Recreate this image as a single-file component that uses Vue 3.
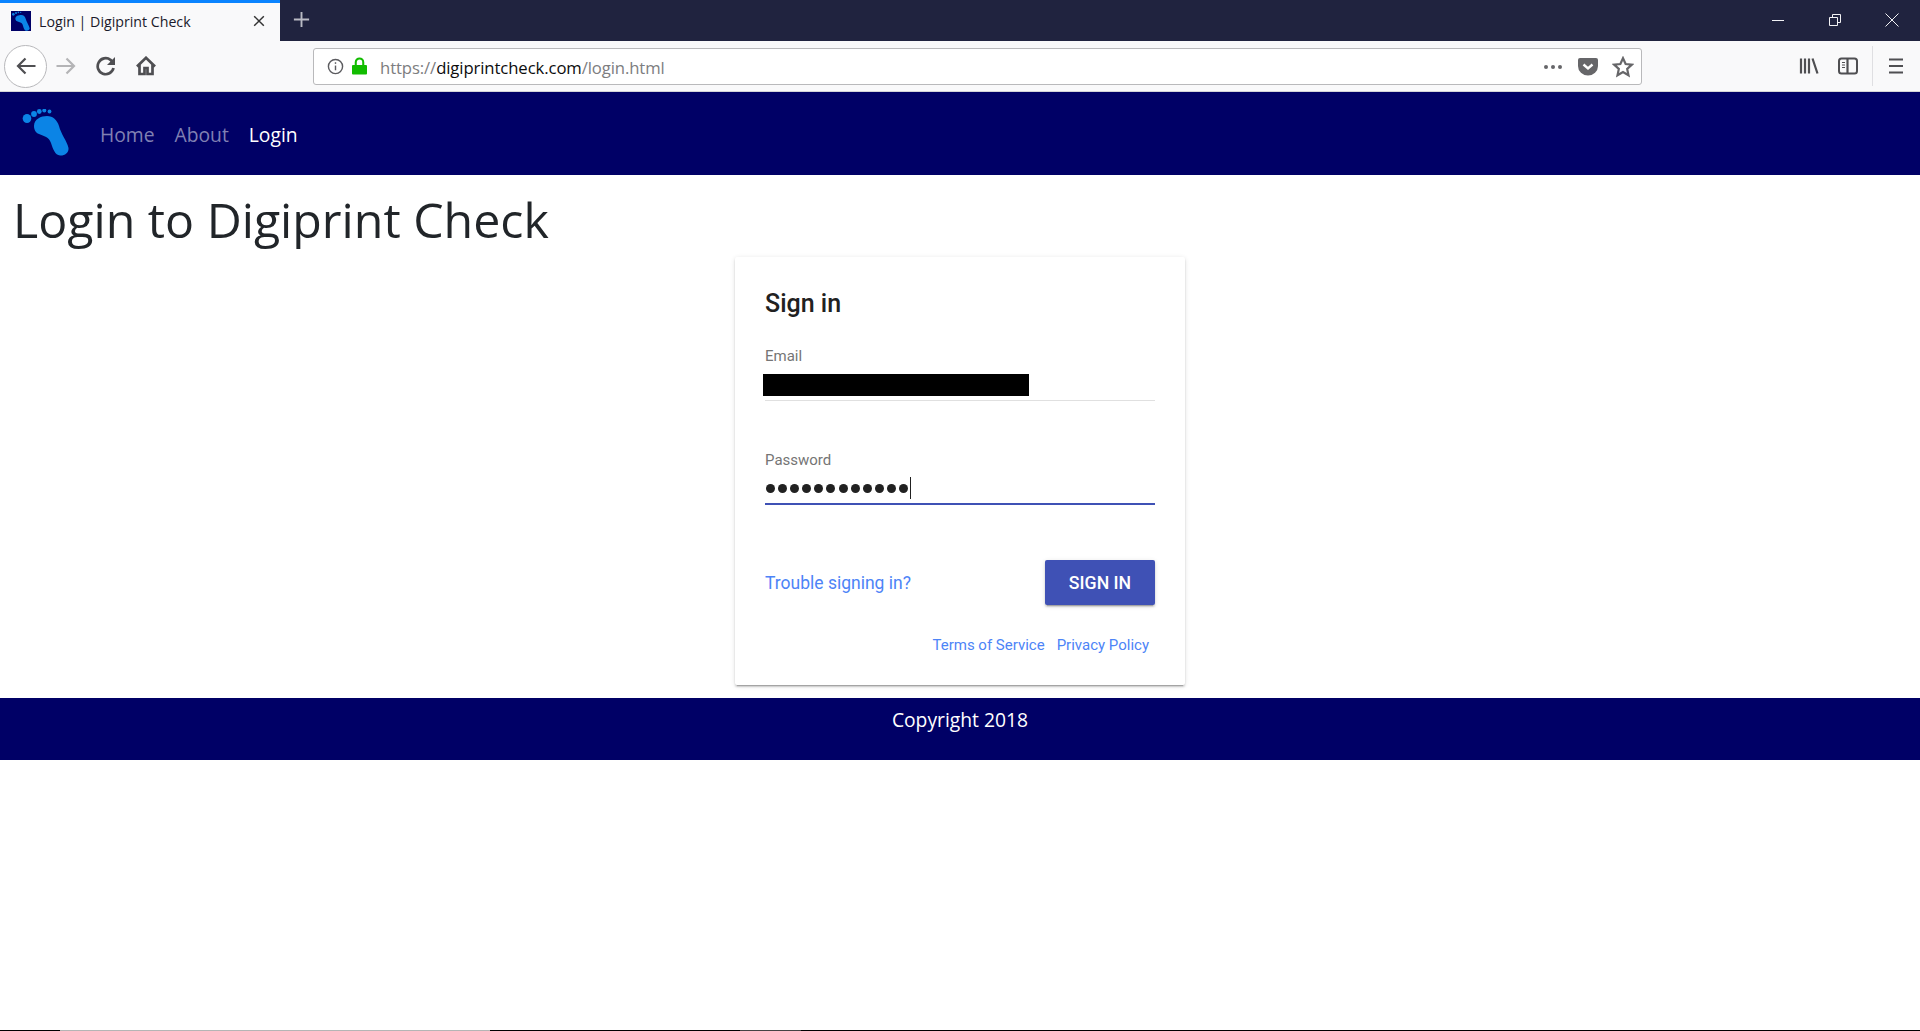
<script setup>
const dots = Array.from({ length: 12 }, (_, i) => i)
</script>

<template>
  <div class="page">
    <header class="tabstrip">
      <div class="tab">
        <svg class="favicon" viewBox="14 14 60 60" aria-hidden="true">
          <rect x="14" y="14" width="60" height="60" fill="#000066" />
          <path class="foot" d="M27 37C27 29 37 26 45 26C52 26 56 31 58 37C60 46 68 56 70 66C71 71 63 75 58 73C53 70 51 61 49 55C47 49 42 48 36 46C31 44 27 42 27 37Z" />
          <circle class="foot" cx="21" cy="24" r="4" />
          <circle class="foot" cx="29" cy="20" r="3" />
          <circle class="foot" cx="36" cy="18" r="2.5" />
          <circle class="foot" cx="43" cy="18" r="2" />
        </svg>
        <span class="tab-title">Login | Digiprint Check</span>
        <svg class="tab-close" viewBox="0 0 16 16" aria-hidden="true"><path d="M2.5 2.5l11 11M13.5 2.5l-11 11" /></svg>
      </div>
      <svg class="new-tab" viewBox="0 0 20 20" aria-hidden="true"><path d="M10 2v16M2 10h16" /></svg>
      <div class="window-controls">
        <svg viewBox="0 0 16 16" aria-hidden="true"><path d="M2 8.5h12" /></svg>
        <svg viewBox="0 0 16 16" aria-hidden="true"><path d="M2.5 5.5h8v8h-8zM5.5 5.5v-3h8v8h-3" /></svg>
        <svg viewBox="0 0 16 16" aria-hidden="true"><path d="M1.5 1.5l13 13M14.5 1.5l-13 13" /></svg>
      </div>
    </header>

    <div class="toolbar">
      <div class="nav-buttons">
        <span class="back-circle">
          <svg class="tool-icon" viewBox="0 0 20 20" aria-hidden="true"><path d="M19.500 10H2M9.500 2.500L2 10l7.500 7.500" /></svg>
        </span>
        <svg class="tool-icon forward" viewBox="0 0 20 20" aria-hidden="true"><path d="M.5 10H18M10.500 2.500L18 10l-7.500 7.500" /></svg>
        <svg class="tool-icon reload" viewBox="0 0 20 20" aria-hidden="true">
          <path d="M17.500 12A8 8 0 1 1 14.500 3.800L17 6.500" />
          <path class="solid" d="M19 1v8h-8z" />
        </svg>
        <svg class="tool-icon home" viewBox="0 0 20 20" aria-hidden="true">
          <path d="M1 10.500L10 1.800l9 8.700M3.500 8v10h5v-6h3v6h5V8" />
        </svg>
      </div>
      <div class="urlbar">
        <svg class="info" viewBox="0 0 18 18" aria-hidden="true">
          <circle cx="9" cy="9" r="7.500" /><path d="M9 8v5" /><path d="M9 4.500v1.700" />
        </svg>
        <svg class="lock" viewBox="0 0 16 18" aria-hidden="true">
          <path d="M1 8h14a1 1 0 0 1 1 1v8a1 1 0 0 1-1 1H1a1 1 0 0 1-1-1V9a1 1 0 0 1 1-1z" />
          <path class="shackle" d="M4 8.500V5a4 4 0 0 1 8 0v3.500" />
        </svg>
        <span class="url"><span class="dim">https://</span><span class="domain">digiprintcheck.com</span><span class="dim">/login.html</span></span>
        <div class="url-actions">
          <svg class="more" viewBox="0 0 20 4" aria-hidden="true"><circle cx="3" cy="2" r="2" /><circle cx="10" cy="2" r="2" /><circle cx="17" cy="2" r="2" /></svg>
          <svg class="pocket" viewBox="0 0 20 18" aria-hidden="true">
            <path d="M2 0h16a2 2 0 0 1 2 2v6a10 9.500 0 0 1-20 0V2a2 2 0 0 1 2-2z" />
            <path class="check" d="M5.500 6.500L10 10.500l4.500-4" />
          </svg>
          <svg class="star" viewBox="0 0 20 20" aria-hidden="true"><path d="M10 2l2.400 5.300 5.600.6-4.200 3.800 1.200 5.800L10 14.600l-5 2.900 1.200-5.800L2 7.900l5.600-.6z" /></svg>
        </div>
      </div>
      <div class="right-tools">
        <svg class="tool-icon library" viewBox="0 0 20 20" aria-hidden="true"><path d="M2 2.500v15M6 2.500v15M10 2.500v15M13.500 2.500l5 15" /></svg>
        <svg class="tool-icon sidebar" viewBox="0 0 20 20" aria-hidden="true">
          <rect x="1" y="2.500" width="18" height="15" rx="2.500" /><path d="M9.500 2.500v15" /><path class="thin" d="M4 6.500h3M4 9h3M4 11.500h3" />
        </svg>
        <span class="tool-sep"></span>
        <svg class="tool-icon menu" viewBox="0 0 20 20" aria-hidden="true"><path d="M3 3.500h14M3 10h14M3 16.500h14" /></svg>
      </div>
    </div>

    <nav class="site-nav">
      <svg class="logo" viewBox="17 20 54 50" aria-hidden="true">
        <path class="foot" d="M33 37C33 30 40 27 46 27C52 27 56 31 58 37C60 45 66 52 67.500 59C68 64 63 67 59 66.500C54 66 52 60 50 54C48 48 43 47 38 45C35 44 33 41 33 37Z" />
        <ellipse class="foot" cx="26" cy="29.500" rx="4.300" ry="4.500" />
        <circle class="foot" cx="33" cy="25" r="2.900" />
        <circle class="foot" cx="38.300" cy="22.500" r="2.400" />
        <circle class="foot" cx="43.300" cy="21.500" r="2" />
        <circle class="foot" cx="48.500" cy="22.500" r="1.900" />
      </svg>
      <a class="nav-link">Home</a>
      <a class="nav-link">About</a>
      <a class="nav-link active">Login</a>
    </nav>

    <h1 class="title">Login to Digiprint Check</h1>

    <section class="card">
      <h2 class="card-title">Sign in</h2>
      <div class="field email">
        <label class="field-label">Email</label>
        <div class="redaction"></div>
        <div class="field-line"></div>
      </div>
      <div class="field password">
        <label class="field-label">Password</label>
        <div class="pw-row">
          <i v-for="d in dots" :key="d" class="pw-dot"></i>
          <span class="caret"></span>
        </div>
        <div class="field-line focus"></div>
      </div>
      <div class="actions">
        <a class="link trouble">Trouble signing in?</a>
        <button class="signin" type="button">SIGN IN</button>
      </div>
      <div class="legal">
        <a class="link">Terms of Service</a>
        <a class="link">Privacy Policy</a>
      </div>
    </section>

    <footer class="site-footer">Copyright 2018</footer>

    <div class="bottom-edge">
      <span class="seg-a"></span><span class="seg-b"></span><span class="seg-c"></span><span class="seg-d"></span><span class="seg-e"></span>
    </div>
  </div>
</template>

<style>
html, body { margin: 0; background: #fff; }
</style>

<style scoped>
.page {
  height: 1031px;
  display: flex;
  flex-direction: column;
  overflow: hidden;
  font-family: "Open Sans", "Noto Sans", sans-serif;
  background: #fff;
}
svg { display: block; flex: none; }

.tabstrip {
  height: 41px;
  flex: none;
  display: flex;
  align-items: center;
  background: #20233f;
}
.tab {
  width: 280px;
  height: 41px;
  box-sizing: border-box;
  border-top: 3px solid #0a84ff;
  background: #f9f9fa;
  display: flex;
  align-items: center;
  padding: 0 14px 2px 11px;
}
.favicon { width: 20px; height: 20px; }
.foot { fill: #0b84e6; }
.tab-title {
  margin-left: 8px;
  font-size: 14.200px;
  color: #1a1a2a;
  white-space: nowrap;
  flex: 1;
}
.tab-close { width: 14px; height: 14px; }
.tab-close path { fill: none; stroke: #333; stroke-width: 1.7; }
.new-tab { width: 19px; height: 19px; margin-left: 12px; margin-bottom: 2px; }
.new-tab path { fill: none; stroke: #b9bac4; stroke-width: 2; }
.window-controls {
  margin-left: auto;
  margin-right: 20px;
  display: flex;
  gap: 41px;
  align-items: center;
  margin-bottom: 2px;
}
.window-controls svg { width: 16px; height: 16px; }
.window-controls path { fill: none; stroke: #f2f2f5; stroke-width: 1; }

.toolbar {
  height: 50px;
  flex: none;
  display: flex;
  align-items: center;
  background: #f9f9fa;
  border-bottom: 1px solid #d4d4d8;
}
.nav-buttons { width: 313px; flex: none; display: flex; align-items: center; padding-left: 4px; box-sizing: border-box; }
.back-circle {
  width: 43px;
  height: 43px;
  box-sizing: border-box;
  border: 1px solid #b8b8bb;
  border-radius: 50%;
  background: #fff;
  display: flex;
  align-items: center;
  justify-content: center;
}
.tool-icon { width: 20px; height: 20px; }
.tool-icon path { fill: none; stroke: #4f4f52; stroke-width: 2.200; }
.forward { margin-left: 9px; }
.forward path { stroke: #b4b4b6; }
.reload { margin-left: 20px; }
.reload path, .home path { stroke-width: 2.700; }
.tool-icon .solid { fill: #4f4f52; stroke: none; }
.home { margin-left: 20px; }

.urlbar {
  width: 1329px;
  height: 37px;
  flex: none;
  box-sizing: border-box;
  border: 1px solid #b9b9bb;
  border-radius: 3px;
  background: #fff;
  display: flex;
  align-items: center;
  padding-left: 13px;
  margin-top: 1px;
}
.info { width: 17px; height: 17px; }
.info circle, .info path { fill: none; stroke: #5b5b5f; stroke-width: 1.500; }
.lock { width: 15px; height: 18px; margin-left: 8px; margin-bottom: 2px; }
.lock path { fill: #12bc00; }
.lock .shackle { fill: none; stroke: #12bc00; stroke-width: 2.200; }
.url { margin-left: 13px; padding-top: 1px; font-size: 16.700px; white-space: nowrap; letter-spacing: -0.1px; }
.dim { color: #7d7d80; }
.domain { color: #0c0c0d; }
.url-actions { margin-left: auto; display: flex; align-items: center; padding-right: 7px; }
.more { width: 20px; height: 4px; fill: #666669; }
.pocket { width: 20px; height: 18px; margin-left: 15px; fill: #666669; }
.pocket .check { fill: none; stroke: #fff; stroke-width: 2.400; }
.star { width: 22px; height: 22px; margin-left: 14px; fill: none; stroke: #666669; stroke-width: 2; }

.right-tools { flex: 1; display: flex; align-items: center; padding-left: 157px; }
.library { margin-right: 19px; }
.sidebar rect { fill: none; stroke: #4f4f52; stroke-width: 2; }
.tool-icon .thin { stroke-width: 1; }
.tool-sep { width: 1px; height: 40px; background: #dfdfe2; margin-left: 14px; margin-right: 13px; }

.site-nav {
  height: 83px;
  flex: none;
  background: #000066;
  display: flex;
  align-items: center;
  padding-left: 18px;
  padding-top: 1px;
  box-sizing: border-box;
}
.logo { width: 54px; height: 50px; margin-right: 18px; }
.nav-link {
  font-size: 19.300px;
  color: #8080b3;
  margin: 0 10px;
}
.nav-link.active { color: #fff; }

.title {
  margin: 0;
  padding: 0 0 0 13px;
  height: 82px;
  line-height: 88px;
  flex: none;
  font-size: 48.300px;
  font-weight: 400;
  color: #212529;
  white-space: nowrap;
}

.card {
  width: 450px;
  height: 428px;
  flex: none;
  box-sizing: border-box;
  margin: 0 auto;
  padding: 31px 30px 30px;
  background: #fff;
  border-radius: 2px;
  box-shadow: 0 2px 2px 0 rgba(0,0,0,.14), 0 3px 1px -2px rgba(0,0,0,.2), 0 1px 5px 0 rgba(0,0,0,.12);
  font-family: Roboto, "Liberation Sans", sans-serif;
}
.card-title {
  margin: 0;
  font-size: 25px;
  font-weight: 500;
  line-height: 32px;
  color: #212121;
}
.field { position: relative; }
.email { margin-top: 26px; }
.password { margin-top: 49px; }
.field-label {
  display: block;
  font-size: 15px;
  line-height: 20px;
  color: #757575;
}
.redaction { width: 266px; height: 22px; margin: 8px 0 0 -2px; background: #000; }
.field-line { height: 1px; margin-top: 4px; background: #e0e0e0; }
.field-line.focus { height: 2px; background: #3f51b5; margin-top: 4px; }
.pw-row { height: 22px; margin-top: 7px; display: flex; align-items: center; gap: 3.100px; padding-left: 1px; }
.pw-dot { width: 9px; height: 9px; border-radius: 50%; background: #212121; }
.caret { width: 1px; height: 22px; background: #212121; margin-left: -1px; }
.actions {
  margin-top: 55px;
  display: flex;
  align-items: center;
  justify-content: space-between;
}
.link { color: #4d84f7; font-size: 15px; white-space: nowrap; }
.trouble { font-size: 17.500px; }
.signin {
  width: 110px;
  height: 45px;
  border: 0;
  border-radius: 2px;
  background: #3f51b5;
  color: #fff;
  font-family: inherit;
  font-size: 17.700px;
  font-weight: 500;
  padding: 0;
  box-shadow: 0 2px 2px 0 rgba(0,0,0,.14), 0 3px 1px -2px rgba(0,0,0,.2), 0 1px 5px 0 rgba(0,0,0,.12);
}
.legal {
  margin-top: 30px;
  display: flex;
  justify-content: flex-end;
  gap: 12px;
  padding-right: 6px;
  line-height: 20px;
}

.site-footer {
  margin-top: 13px;
  height: 62px;
  flex: none;
  box-sizing: border-box;
  padding-top: 7px;
  background: #000066;
  color: #fff;
  font-size: 19.300px;
  line-height: 30px;
  text-align: center;
}

.bottom-edge { margin-top: auto; height: 1px; flex: none; display: flex; background: #000; }
.bottom-edge span { display: block; height: 1px; }
.seg-a { width: 60px; background: #000; }
.seg-b { width: 430px; background: #b5b5b5; }
.seg-c { width: 250px; background: #000; }
.seg-d { width: 61px; background: #444; }
.seg-e { flex: 1; background: #000; }
</style>
